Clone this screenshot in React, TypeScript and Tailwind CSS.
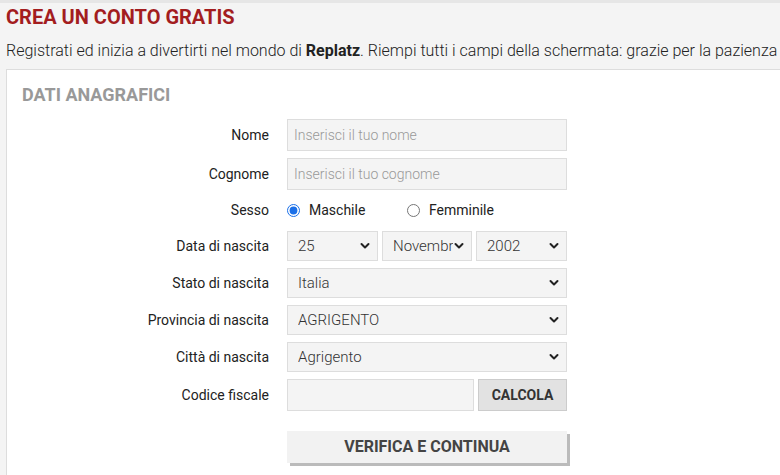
import type { ReactNode } from "react";

function Chevron() {
  return (
    <svg
      className="pointer-events-none absolute top-1/2 right-[8px] h-[8px] w-[10px] -translate-y-1/2 text-[#222]"
      fill="none"
      stroke="currentColor"
      strokeLinecap="round"
      strokeLinejoin="round"
      strokeWidth={2}
      viewBox="0 0 10 8"
    >
      <polyline points="1.5,2 5,5.5 8.5,2" />
    </svg>
  );
}

function Select({
  value,
  options,
  width,
  tight = false,
}: {
  value: string;
  options: string[];
  width: string;
  tight?: boolean;
}) {
  return (
    <div className={`relative ${width}`}>
      <select
        className={`h-[30px] w-full appearance-none rounded-none border border-[#dddddd] bg-[#f4f4f4] pl-[10px] font-light text-[#333] text-[15px] outline-none ${tight ? "pr-[18px]" : "pr-[22px]"}`}
        defaultValue={value}
      >
        {options.map((o) => (
          <option key={o} value={o}>
            {o}
          </option>
        ))}
      </select>
      <Chevron />
    </div>
  );
}

function Row({ label, children, className = "" }: { label: string; children: ReactNode; className?: string }) {
  return (
    <div className={`flex items-center ${className}`}>
      <label className="w-[262px] text-right text-[#222] text-[14px]">{label}</label>
      <div className="ml-[18px] flex items-center">{children}</div>
    </div>
  );
}

export default function App() {
  return (
    <div className="h-[475px] w-[780px] overflow-hidden bg-[#f4f4f4] font-['Roboto',sans-serif]">
      {/* striscia superiore */}
      <div className="h-[3px] bg-[#e6e6e6]" />

      <div className="pt-[2px] pl-[6px]">
        <h1 className="font-bold text-[#a31d1f] text-[20px] leading-[24px]">CREA UN CONTO GRATIS</h1>
        <p className="mt-[10px] whitespace-nowrap font-light text-[#222] text-[16px] leading-[24px]">
          Registrati ed inizia a divertirti nel mondo di <strong className="font-bold">Replatz</strong>. Riempi
          tutti i campi della schermata: grazie per la pazienza
        </p>

        <div className="mt-[6px] w-[800px] border border-[#dddddd] bg-white pt-[14px] pb-[20px]">
          <h2 className="pl-[15px] font-bold text-[#999] text-[18px] leading-[22px]">DATI ANAGRAFICI</h2>

          <div className="mt-[13px] flex flex-col gap-[7px]">
            <Row label="Nome">
              <input
                className="h-[32px] w-[280px] rounded-none border border-[#dddddd] bg-[#f4f4f4] px-[6px] font-light text-[#333] text-[14px] outline-none placeholder:text-[#999]"
                placeholder="Inserisci il tuo nome"
                type="text"
              />
            </Row>
            <Row label="Cognome">
              <input
                className="h-[32px] w-[280px] rounded-none border border-[#dddddd] bg-[#f4f4f4] px-[6px] font-light text-[#333] text-[14px] outline-none placeholder:text-[#999]"
                placeholder="Inserisci il tuo cognome"
                type="text"
              />
            </Row>
            <Row className="h-[27px]" label="Sesso">
              <label className="flex w-[120px] items-center gap-[9px] text-[#222] text-[14px]">
                <input className="m-0 h-[13px] w-[13px] accent-[#1a6fe8]" defaultChecked name="sesso" type="radio" />
                Maschile
              </label>
              <label className="flex items-center gap-[9px] text-[#222] text-[14px]">
                <input className="m-0 h-[13px] w-[13px]" name="sesso" type="radio" />
                Femminile
              </label>
            </Row>
            <Row label="Data di nascita">
              <div className="flex gap-[4px]">
                <Select options={["25"]} value="25" width="w-[91px]" />
                <Select options={["Novembre"]} tight value="Novembre" width="w-[90px]" />
                <Select options={["2002"]} value="2002" width="w-[91px]" />
              </div>
            </Row>
            <Row label="Stato di nascita">
              <Select options={["Italia"]} value="Italia" width="w-[280px]" />
            </Row>
            <Row label="Provincia di nascita">
              <Select options={["AGRIGENTO"]} value="AGRIGENTO" width="w-[280px]" />
            </Row>
            <Row label="Città di nascita">
              <Select options={["Agrigento"]} value="Agrigento" width="w-[280px]" />
            </Row>
            <Row label="Codice fiscale">
              <div className="flex gap-[4px]">
                <input
                  className="h-[32px] w-[187px] rounded-none border border-[#dddddd] bg-[#f4f4f4] px-[6px] font-light text-[#333] text-[14px] outline-none"
                  type="text"
                />
                <button
                  className="h-[32px] w-[89px] border border-[#cccccc] bg-[#e2e2e2] font-bold text-[#333] text-[14px]"
                  type="button"
                >
                  CALCOLA
                </button>
              </div>
            </Row>
          </div>

          <div className="mt-[20px] pl-[280px]">
            <button
              className="h-[32px] w-[280px] bg-[#f2f2f2] font-bold text-[#444] text-[16px] shadow-[3px_3px_0_#bbbbbb]"
              type="button"
            >
              VERIFICA E CONTINUA
            </button>
          </div>
        </div>
      </div>
    </div>
  );
}
